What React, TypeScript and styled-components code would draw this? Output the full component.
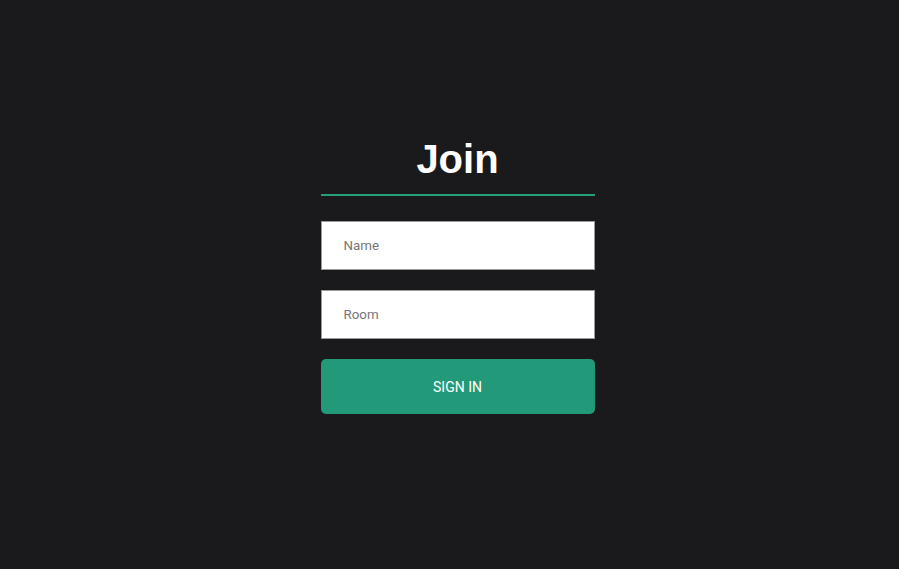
import styled, { createGlobalStyle } from "styled-components";

const GlobalStyle = createGlobalStyle`
  html, body {
    margin: 0;
    padding: 0;
    background-color: #1a1a1d;
  }
`;

const Page = styled.div`
  display: flex;
  justify-content: center;
  align-items: flex-start;
  width: 100%;
  height: 569px;
  box-sizing: border-box;
  padding-left: 16px;
  padding-top: 132px;
  background-color: #1a1a1d;
  font-family: Roboto, "Liberation Sans", Arial, sans-serif;
`;

const JoinBox = styled.div`
  display: flex;
  flex-direction: column;
  width: 274px;
`;

const Heading = styled.h1`
  margin: 0 0 20px 0;
  padding-bottom: 8px;
  color: white;
  font-family: "Liberation Sans", Arial, sans-serif;
  font-size: 40px;
  font-weight: 700;
  line-height: 54px;
  text-align: center;
  border-bottom: 2px solid #26a07a;
`;

const Input = styled.input`
  box-sizing: border-box;
  width: 100%;
  height: 49px;
  margin: 5px 0 15px 0;
  padding: 0 0 0 22px;
  border: 1px solid #9a9a9a;
  border-radius: 0;
  background: white;
  font-family: Roboto, "Liberation Sans", Arial, sans-serif;
  font-size: 13.33px;
  color: #333;
  outline: none;

  &::placeholder {
    color: #757575;
  }
`;

const SignInButton = styled.button`
  box-sizing: border-box;
  width: 100%;
  height: 55px;
  margin-top: 5px;
  border: none;
  border-radius: 5px;
  background-color: #229a79;
  color: white;
  font-family: Roboto, "Liberation Sans", Arial, sans-serif;
  font-size: 14px;
  text-transform: uppercase;
  cursor: pointer;
`;

const App = () => {
  return (
    <>
      <GlobalStyle />
      <Page>
        <JoinBox>
          <Heading>Join</Heading>
          <Input placeholder="Name" type="text" />
          <Input placeholder="Room" type="text" />
          <SignInButton type="submit">Sign In</SignInButton>
        </JoinBox>
      </Page>
    </>
  );
};

export default App;
